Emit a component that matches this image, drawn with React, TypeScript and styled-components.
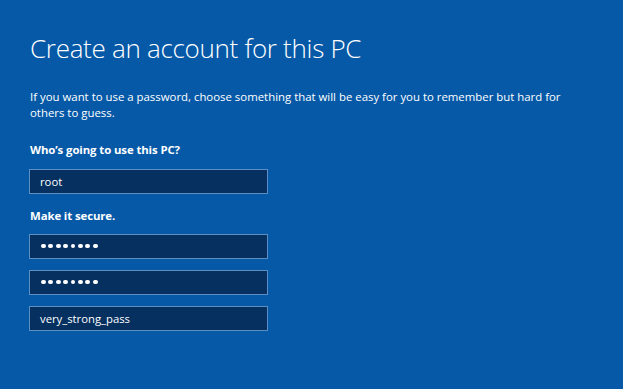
import styled, { createGlobalStyle } from 'styled-components';

const GlobalStyle = createGlobalStyle`
  html, body {
    margin: 0;
    padding: 0;
    background: #0659a7;
  }
`;

const Page = styled.main`
  box-sizing: border-box;
  width: 623px;
  height: 389px;
  padding: 30px 0 0 29px;
  background: #0659a7;
  color: #ffffff;
  font-family: 'Open Sans', 'Liberation Sans', sans-serif;
  overflow: hidden;
`;

const Title = styled.h1`
  margin: 0 0 0 1px;
  font-size: 26px;
  font-weight: 300;
  line-height: 36px;
  letter-spacing: -0.3px;
`;

const Intro = styled.p`
  margin: 23px 0 0 1px;
  width: 560px;
  font-size: 11.4px;
  line-height: 16px;
`;

const Label = styled.div<{ $top: number }>`
  margin: ${({ $top }) => $top}px 0 0 1px;
  font-size: 11.4px;
  font-weight: 700;
  line-height: 16px;
  letter-spacing: -0.1px;
`;

const Fields = styled.div<{ $top: number }>`
  display: flex;
  flex-direction: column;
  gap: 11px;
  margin-top: ${({ $top }) => $top}px;
`;

const Field = styled.div`
  box-sizing: border-box;
  display: flex;
  align-items: center;
  width: 239px;
  height: 25px;
  padding: 0 9px 1px 10px;
  background: #05305f;
  border: 1px solid #5d8fc4;
  font-size: 11.3px;
  color: #ffffff;
`;

const Dots = styled.span`
  display: flex;
  gap: 2.6px;
  padding-left: 1px;
`;

const Dot = styled.span`
  width: 4.8px;
  height: 4.8px;
  border-radius: 50%;
  background: #ffffff;
`;

function Masked({ count }: { count: number }) {
  return (
    <Dots aria-label="password">
      {Array.from({ length: count }, (_, i) => (
        <Dot key={i} />
      ))}
    </Dots>
  );
}

export default function App() {
  return (
    <>
      <GlobalStyle />
      <Page>
        <Title>Create an account for this PC</Title>
        <Intro>
          If you want to use a password, choose something that will be easy for you to remember but hard for
          others to guess.
        </Intro>
        <Label $top={21}>Who’s going to use this PC?</Label>
        <Fields $top={11}>
          <Field>root</Field>
        </Fields>
        <Label $top={14}>Make it secure.</Label>
        <Fields $top={10}>
          <Field>
            <Masked count={8} />
          </Field>
          <Field>
            <Masked count={8} />
          </Field>
          <Field>very_strong_pass</Field>
        </Fields>
      </Page>
    </>
  );
}
